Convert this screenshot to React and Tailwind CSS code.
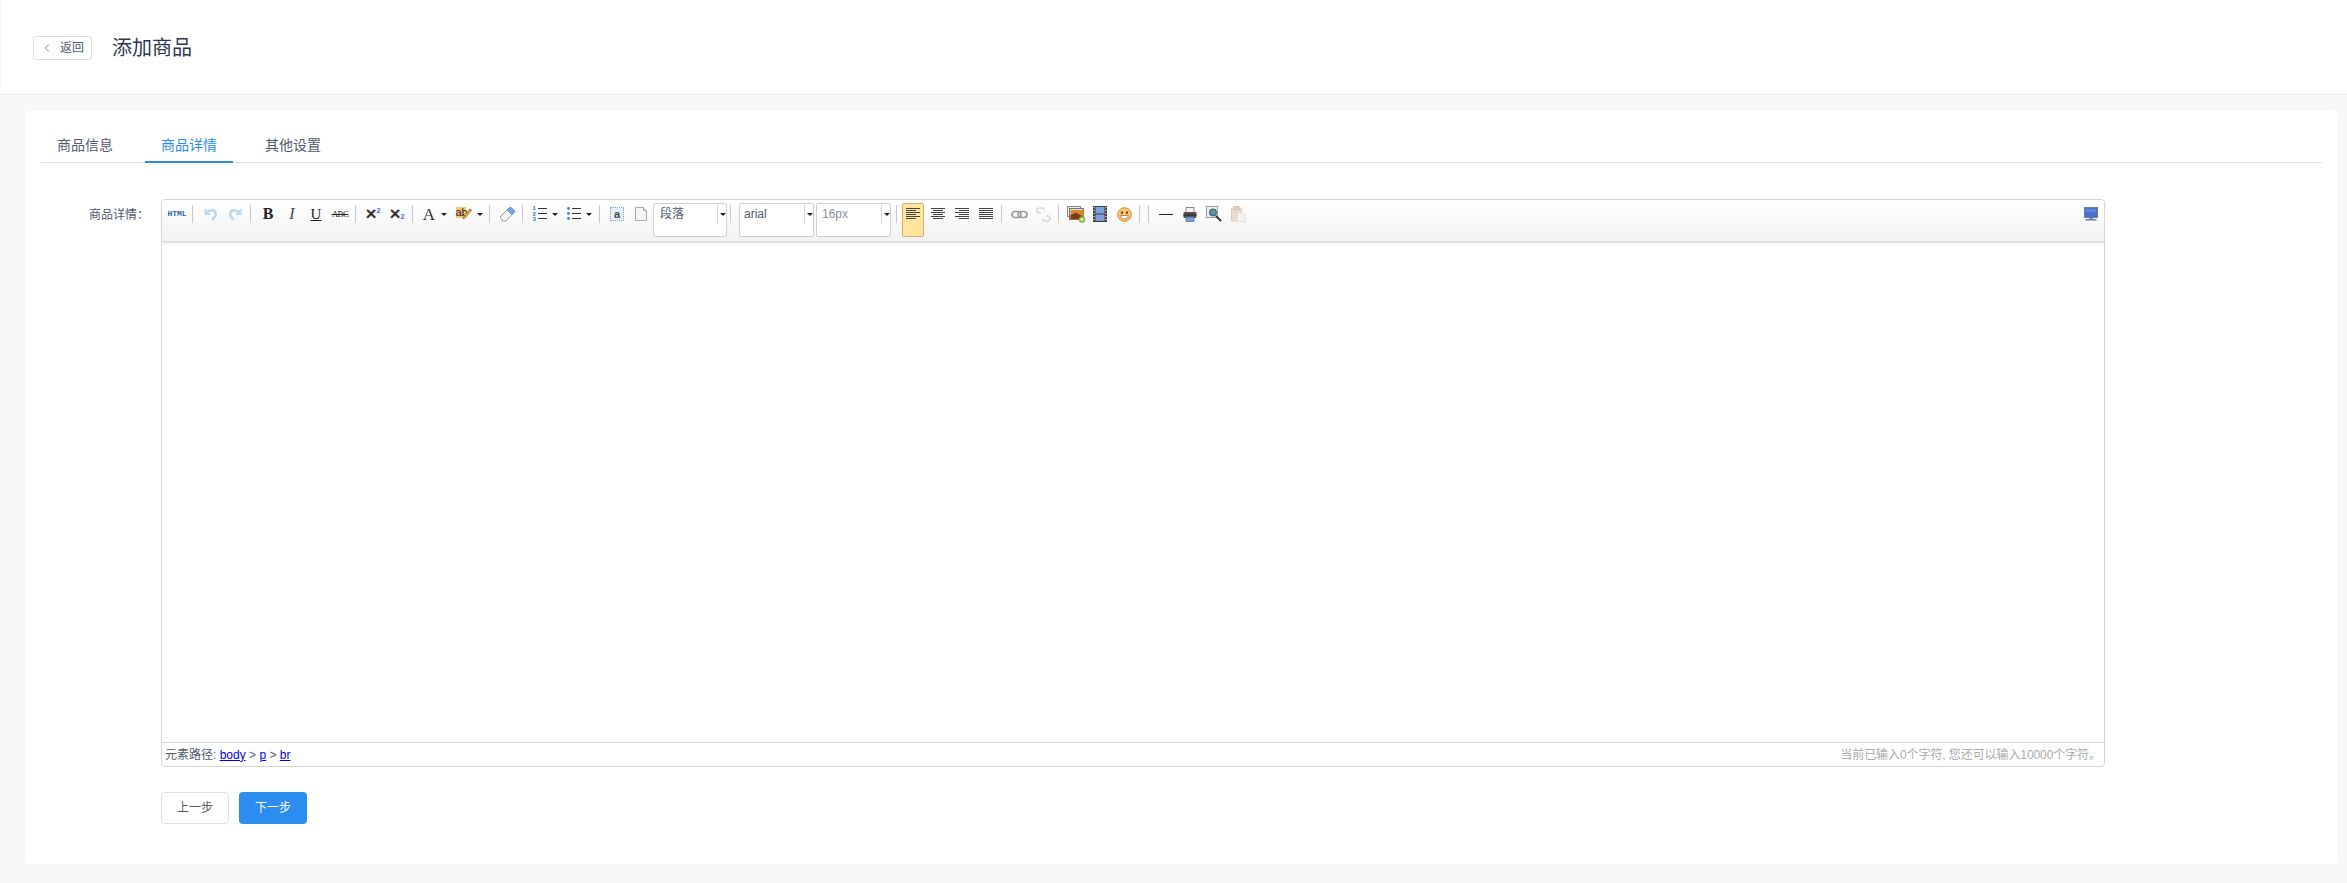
import React from "react";
import { ChevronLeft } from "lucide-react";

const Sep = () => (
  <div className="w-[9px] h-[18px] mt-[1px] flex justify-start pl-[3px] shrink-0">
    <div className="w-px h-full bg-[#c8c8c8]" />
  </div>
);

const Caret = () => <div className="w-0 h-0 border-x-[3px] border-x-transparent border-t-[3px] border-t-[#222]" />;

const Btn = ({ children, w = "w-6" }) => (
  <div className={`${w} h-[20px] flex items-center justify-center shrink-0`}>{children}</div>
);

const Split = ({ children, gap = "gap-[5px]" }) => (
  <div className={`w-[34px] h-[20px] flex items-center justify-center shrink-0 ${gap}`}>
    {children}
    <Caret />
  </div>
);

const Combo = ({ label, color = "text-[#515a6e]", w = "w-[75px]", pad = "pl-[5px]" }) => (
  <div className={`${w} h-[34px] -mt-px shrink-0 border border-[#d0d0d0] rounded-[2px] bg-white flex items-start`}>
    <span className={`flex-1 ${pad} leading-[20px] text-xs ${color}`}>{label}</span>
    <div className="w-px h-5 bg-[#d4d4d4]" />
    <div className="w-2 h-5 flex items-center justify-center pl-px">
      <Caret />
    </div>
  </div>
);

const Undo = ({ flip }) => (
  <svg width="14" height="14" viewBox="0 0 14 14" className={flip ? "-scale-x-100" : ""}>
    <path d="M3 5.5 C6.5 1.8 11.8 3 11.8 7 C11.8 9.6 10 11.3 8 12.6" fill="none" stroke="#bcd9ef" strokeWidth="2.6" />
    <path d="M0.5 1 L0.5 8 L7 8 Z" fill="#bcd9ef" />
  </svg>
);

const Lines = ({ rows }) => (
  <svg width="14" height="12" viewBox="0 0 14 12">
    {rows.map(([x1, x2], i) => (
      <rect key={i} x={x1} y={i * 2} width={x2 - x1} height="1" fill="#444" />
    ))}
  </svg>
);

const Ol = () => (
  <div className="relative w-[14px] h-[14px]">
    <span className="absolute left-0 top-[-2px] font-['Liberation_Sans'] font-bold text-[6px] leading-[6px] text-[#2a6fd8]">1</span>
    <span className="absolute left-0 top-[4px] font-['Liberation_Sans'] font-bold text-[6px] leading-[6px] text-[#2a6fd8]">2</span>
    <span className="absolute left-0 top-[9px] font-['Liberation_Sans'] font-bold text-[6px] leading-[6px] text-[#2a6fd8]">3</span>
    <div className="absolute left-[5px] top-[1px] w-[9px] h-px bg-[#333]" />
    <div className="absolute left-[5px] top-[6px] w-[9px] h-px bg-[#333]" />
    <div className="absolute left-[5px] top-[11px] w-[9px] h-px bg-[#333]" />
  </div>
);

const Ul = () => (
  <svg width="14" height="14" viewBox="0 0 14 14">
    <circle cx="1.5" cy="1.5" r="1.4" fill="#3f7fdc" />
    <circle cx="1.5" cy="6.5" r="1.4" fill="#3f7fdc" />
    <circle cx="1.5" cy="11.5" r="1.4" fill="#3f7fdc" />
    <rect x="5" y="1" width="9" height="1" fill="#333" />
    <rect x="5" y="6" width="9" height="1" fill="#333" />
    <rect x="5" y="11" width="9" height="1" fill="#333" />
  </svg>
);

const Eraser = () => (
  <svg width="17" height="17" viewBox="0 0 17 17">
    <path d="M1 11 L10 2 L15 6 L7 15 L4 15 Z" fill="#f4f4f4" stroke="#9a9a9a" />
    <path d="M8 4 L10.5 1.5 C11 1 11.5 1 12 1.4 L15.6 4.6 C16 5 16 5.6 15.6 6 L13 8.8 Z" fill="#6fa8e8" stroke="#4d86c9" strokeWidth="0.6" />
  </svg>
);

const Highlight = () => (
  <div className="relative w-4 h-[14px]">
    <div className="absolute left-0 top-0 w-[10px] h-[11px] bg-[#f7c27a] text-[11px] leading-[10px] text-[#222] font-['Liberation_Sans'] text-center">ab</div>
    <svg className="absolute left-[6px] top-[1px]" width="10" height="12" viewBox="0 0 10 12">
      <path d="M1 11 L2 8 L8 1 L9.5 2.5 L3.5 9.5 Z" fill="#e0a83a" stroke="#7a5a20" strokeWidth="0.6" />
      <path d="M7.5 1.5 L8.3 0.6 L9.8 2 L9 3 Z" fill="#d8504a" />
    </svg>
  </div>
);

const Source = () => (
  <div className="w-[14px] h-[14px] border border-dotted border-[#7fa6dc] bg-[#e6effa] flex items-center justify-center text-[11px] leading-none font-bold text-[#444] font-['Liberation_Sans']">
    a
  </div>
);

const Page = () => (
  <svg width="12" height="14" viewBox="0 0 12 14">
    <path d="M0.5 0.5 H8.5 L11.5 3.5 V13.5 H0.5 Z" fill="#f5f5f5" stroke="#a8a8a8" />
    <path d="M8.5 0.5 V3.5 H11.5" fill="#e4e4e4" stroke="#a8a8a8" />
  </svg>
);

const Link = () => (
  <svg width="17" height="9" viewBox="0 0 17 9" fill="none" stroke="#9b9b9b" strokeWidth="1.7">
    <rect x="1" y="1.5" width="9" height="6" rx="3" />
    <rect x="7" y="1.5" width="9" height="6" rx="3" />
  </svg>
);

const Unlink = () => (
  <svg width="15" height="15" viewBox="0 0 15 15" fill="none" stroke="#d8d8d8" strokeWidth="1.6">
    <path d="M5 6 H3 C1.5 6 1 5 1 3.5 C1 2 2 1 3.5 1 H6 C7.5 1 8 2.5 8 3.5" />
    <path d="M10 9 H12 C13.5 9 14 10 14 11.5 C14 13 13 14 11.5 14 H9 C7.5 14 7 12.5 7 11.5" />
  </svg>
);

const ImageIcon = () => (
  <svg width="19" height="17" viewBox="0 0 19 17">
    <rect x="0.5" y="0.5" width="13" height="10" fill="#eee" stroke="#888" />
    <rect x="2.5" y="2.5" width="14" height="11" fill="#ddd" stroke="#777" />
    <rect x="3.5" y="4" width="13" height="9" fill="#d98a2b" />
    <path d="M3.5 9 L9 6.5 L16.5 11 V13 H3.5 Z" fill="#7a3b12" />
    <circle cx="15" cy="13.5" r="3" fill="#8cc63f" stroke="#6d9f2a" strokeWidth="0.6" />
    <path d="M15 11.8 V15.2 M13.3 13.5 H16.7" stroke="#fff" strokeWidth="1" />
  </svg>
);

const Video = () => (
  <svg width="14" height="16" viewBox="0 0 14 16">
    <rect x="0" y="0" width="14" height="16" fill="#3d3d3d" />
    <rect x="2.5" y="1" width="9" height="6.5" fill="#7d9fe0" />
    <rect x="2.5" y="8.5" width="9" height="6.5" fill="#7d9fe0" />
    {[1, 4, 7, 10, 13].map((y) => (
      <g key={y}>
        <rect x="0.5" y={y} width="1.2" height="1.2" fill="#ddd" />
        <rect x="12.3" y={y} width="1.2" height="1.2" fill="#ddd" />
      </g>
    ))}
  </svg>
);

const Emoji = () => (
  <svg width="15" height="15" viewBox="0 0 15 15">
    <circle cx="7.5" cy="7.5" r="6.8" fill="#f7c779" stroke="#d98b2b" strokeWidth="1" />
    <ellipse cx="5" cy="5.7" rx="1.1" ry="1.4" fill="#7a3f12" />
    <ellipse cx="10" cy="5.7" rx="1.1" ry="1.4" fill="#7a3f12" />
    <path d="M3.5 8.5 H11.5 C11.2 11 9.5 12 7.5 12 C5.5 12 3.8 11 3.5 8.5 Z" fill="#fff" stroke="#a8621f" strokeWidth="0.7" />
  </svg>
);

const Print = () => (
  <svg width="14" height="15" viewBox="0 0 14 15">
    <rect x="3" y="0.5" width="8" height="5" fill="#f2f2f2" stroke="#888" />
    <rect x="0.5" y="5" width="13" height="6" rx="1" fill="#555" />
    <rect x="0.5" y="7.5" width="13" height="1" fill="#222" />
    <rect x="3" y="10" width="8" height="4.5" fill="#6aa3e6" stroke="#555" strokeWidth="0.6" />
  </svg>
);

const Preview = () => (
  <svg width="16" height="16" viewBox="0 0 16 16">
    <rect x="0.5" y="0.5" width="11" height="11" fill="#eef1f5" stroke="#9a9a9a" />
    <circle cx="7" cy="6.5" r="3.6" fill="#4f88c9" stroke="#555" />
    <path d="M5 8 L8 4 L9 6 Z" fill="#6fb04a" />
    <path d="M10 10 L15 15" stroke="#333" strokeWidth="2" />
  </svg>
);

const Paste = () => (
  <svg width="15" height="16" viewBox="0 0 15 16">
    <rect x="0.5" y="2" width="10" height="13" rx="1" fill="#ecdcd0" stroke="#dcc8b8" />
    <rect x="3" y="0.5" width="5" height="3" fill="#e4d4c8" stroke="#cfbfb2" />
    <path d="M6.5 6.5 H11 L14 9 V15.5 H6.5 Z" fill="#f4f4f4" stroke="#dedede" />
  </svg>
);

const Screen = () => (
  <svg width="14" height="14" viewBox="0 0 14 14">
    <rect x="0.5" y="0.5" width="13" height="10" fill="#4a6fd0" stroke="#6a7f9f" />
    <rect x="2" y="2" width="10" height="3" fill="#5f85e0" />
    <rect x="5" y="11" width="4" height="1.2" fill="#7f8fa8" />
    <rect x="1.5" y="12.3" width="11" height="1.2" fill="#4c6296" />
  </svg>
);

const serif = "font-['Liberation_Serif'] text-[#222] leading-none";

export default function App() {
  return (
    <div className="min-h-[883px] bg-[#f5f7f9] pl-px font-['Liberation_Sans','Noto_Sans_CJK_SC',sans-serif]">
      <div className="h-[95px] bg-white border-b border-[#e8eaec] pl-8 pt-[2px] flex items-center gap-5">
        <div className="w-[59px] h-6 border border-[#dcdee2] rounded-[3px] flex items-center pl-[7px] gap-[7px] text-xs text-[#515a6e]">
          <ChevronLeft size={12} strokeWidth={1.5} />
          <span>返回</span>
        </div>
        <h1 className="text-xl text-[#2d3750]">添加商品</h1>
      </div>

      <div className="pt-4 pl-6 pr-[10px] pb-[19px]">
        <div className="h-[753px] bg-white rounded-[4px] pt-4 pl-4 pr-[15px]">
          <div className="h-9 border-b border-[#dcdee2] flex text-sm text-[#515a6e]">
            <div className="w-[88px] h-9 flex items-center justify-center mr-4 pb-px">商品信息</div>
            <div className="w-[88px] h-9 flex items-center justify-center mr-4 pt-px text-[#2d8cf0] border-b-2 border-[#2d8cf0]">商品详情</div>
            <div className="w-[88px] h-9 flex items-center justify-center pb-px">其他设置</div>
          </div>

          <div className="flex mt-9">
            <div className="w-[120px] pr-3 pt-[7px] text-right text-xs leading-[18px] text-[#515a6e]">商品详情：</div>
            <div className="w-[1944px]">
              <div className="h-[568px] border border-[#d4d4d4] rounded-[4px] flex flex-col bg-white">
                <div className="h-[42px] shrink-0 rounded-t-[4px] border-b border-[#d4d4d4] bg-gradient-to-b from-white to-[#f2f2f2] shadow-[0_1px_3px_#dddddd] pl-[3px] pr-px pt-1 flex items-start">
                  <Btn><span className="font-['Liberation_Mono'] font-bold text-[8px] text-[#2b6aa8]">HTML</span></Btn>
                  <div className="w-[10px] flex"><Sep /></div>
                  <Btn><Undo /></Btn>
                  <Btn><Undo flip /></Btn>
                  <Sep />
                  <Btn><span className={`${serif} font-bold text-[16px]`}>B</span></Btn>
                  <Btn><span className={`${serif} italic text-[16px] text-[#444]`}>I</span></Btn>
                  <Btn><span className={`${serif} text-[15px] underline`}>U</span></Btn>
                  <Btn><span className={`${serif} text-[9px] tracking-[-0.6px] line-through`}>ABC</span></Btn>
                  <Sep />
                  <Btn>
                    <span className="flex items-start font-['Liberation_Sans'] font-bold text-[19px] text-[#333] leading-[14px]">×<span className="text-[7px] leading-[8px] text-[#2a6fd8]">2</span></span>
                  </Btn>
                  <Btn>
                    <span className="flex items-end font-['Liberation_Sans'] font-bold text-[19px] text-[#333] leading-[14px]">×<span className="text-[7px] leading-[8px] text-[#2a6fd8]">2</span></span>
                  </Btn>
                  <Sep />
                  <Split gap="gap-[6px]"><span className={`${serif} text-[17px] text-[#333]`}>A</span></Split>
                  <Split><Highlight /></Split>
                  <Sep />
                  <Btn><Eraser /></Btn>
                  <Sep />
                  <Split gap="gap-[5px]"><Ol /></Split>
                  <Split gap="gap-[5px]"><Ul /></Split>
                  <Sep />
                  <Btn><Source /></Btn>
                  <Btn><Page /></Btn>
                  <Combo label="段落" w="w-[74px]" pad="pl-[6px]" />
                  <div className="w-3 flex"><Sep /></div>
                  <Combo label="arial" pad="pl-1" />
                  <div className="w-[2px]" />
                  <Combo label="16px" color="text-[#8a8f9c]" />
                  <div className="w-[11px] flex pl-[2px]"><Sep /></div>
                  <div className="w-[22px] h-[34px] -mt-px shrink-0 mr-[2px] border border-[#dcac6c] rounded-[2px] bg-[#ffe69f] flex justify-center pt-[4px]">
                    <Lines rows={[[0, 14], [0, 10], [0, 14], [0, 10], [0, 14], [0, 10]]} />
                  </div>
                  <Btn><Lines rows={[[0, 14], [2, 12], [0, 14], [2, 12], [0, 14], [2, 12]]} /></Btn>
                  <Btn><Lines rows={[[0, 14], [4, 14], [0, 14], [4, 14], [0, 14], [4, 14]]} /></Btn>
                  <Btn><Lines rows={[[0, 14], [0, 14], [0, 14], [0, 14], [0, 14], [0, 14]]} /></Btn>
                  <Sep />
                  <Btn><Link /></Btn>
                  <Btn><Unlink /></Btn>
                  <Sep />
                  <Btn><ImageIcon /></Btn>
                  <Btn><Video /></Btn>
                  <Btn><Emoji /></Btn>
                  <Sep />
                  <Sep />
                  <Btn><div className="w-[14px] h-px bg-[#222]" /></Btn>
                  <Btn><Print /></Btn>
                  <Btn><Preview /></Btn>
                  <Btn><Paste /></Btn>
                  <div className="ml-auto"><Btn><Screen /></Btn></div>
                </div>
                <div className="flex-1" />
                <div className="h-6 shrink-0 border-t border-[#d4d4d4] flex items-center justify-between pl-[3px] pr-[3px] text-xs leading-none text-[#515a6e]">
                  <span>
                    元素路径: <a className="text-[#0000ee] underline">body</a> &gt; <a className="text-[#0000ee] underline">p</a> &gt; <a className="text-[#0000ee] underline">br</a>
                  </span>
                  <span className="text-[#aaaaaa] tracking-[-0.08px]">当前已输入0个字符, 您还可以输入10000个字符。</span>
                </div>
              </div>
              <div className="flex gap-[10px] mt-[25px]">
                <div className="w-[68px] h-8 border border-[#dcdee2] rounded-[4px] flex items-center justify-center text-xs text-[#515a6e]">上一步</div>
                <div className="w-[68px] h-8 bg-[#2d8cf0] rounded-[4px] flex items-center justify-center text-xs text-white">下一步</div>
              </div>
            </div>
          </div>
        </div>
      </div>
    </div>
  );
}
